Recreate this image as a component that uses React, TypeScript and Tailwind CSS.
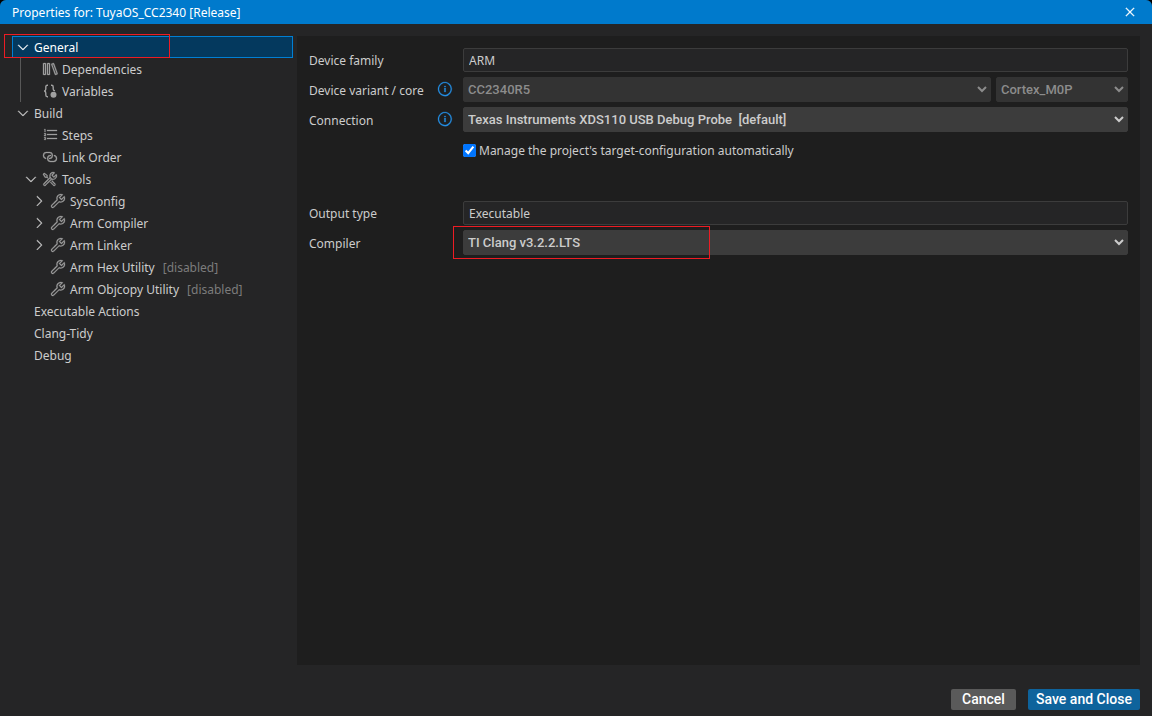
import { useState } from 'react';
import type { ComponentType, ReactNode } from 'react';
import {
  VscChevronDown,
  VscChevronRight,
  VscClose,
  VscInfo,
  VscLibrary,
  VscLink,
  VscListOrdered,
  VscSymbolProperty,
  VscTools,
} from 'react-icons/vsc';

interface IconProps {
  className?: string;
}

// braces with a filled dot at the lower right
function VariablesIcon({ className }: IconProps) {
  return (
    <svg viewBox="0 0 16 16" className={className} fill="none" stroke="currentColor">
      <g strokeWidth="1.4">
        <path d="M6 2.3H5.4C4.3 2.3 3.8 2.9 3.8 4v2c0 1.1-.5 1.8-1.6 2 1.1.2 1.6.9 1.6 2v2c0 1.1.5 1.7 1.6 1.7H6" />
        <path d="M9 2.3h.6c1.1 0 1.6.6 1.6 1.7v2c0 1 .6 1.7 1.8 1.9" />
      </g>
      <circle cx="11.5" cy="11.8" r="3" fill="currentColor" stroke="none" />
    </svg>
  );
}

interface TreeNode {
  label: string;
  icon?: ComponentType<IconProps>;
  disabled?: boolean;
  collapsed?: boolean;
  children?: TreeNode[];
}

const tree: TreeNode[] = [
  {
    label: 'General',
    children: [
      { label: 'Dependencies', icon: VscLibrary },
      { label: 'Variables', icon: VariablesIcon },
    ],
  },
  {
    label: 'Build',
    children: [
      { label: 'Steps', icon: VscListOrdered },
      { label: 'Link Order', icon: VscLink },
      {
        label: 'Tools',
        icon: VscTools,
        children: [
          { label: 'SysConfig', icon: VscSymbolProperty, collapsed: true },
          { label: 'Arm Compiler', icon: VscSymbolProperty, collapsed: true },
          { label: 'Arm Linker', icon: VscSymbolProperty, collapsed: true },
          { label: 'Arm Hex Utility', icon: VscSymbolProperty, disabled: true },
          { label: 'Arm Objcopy Utility', icon: VscSymbolProperty, disabled: true },
        ],
      },
    ],
  },
  { label: 'Executable Actions' },
  { label: 'Clang-Tidy' },
  { label: 'Debug' },
];

const indents = ['pl-[2px]', 'pl-[10px]', 'pl-[18px]'];

interface TreeItemProps {
  node: TreeNode;
  depth: number;
  selected: string;
  onSelect: (label: string) => void;
}

function TreeItem({ node, depth, selected, onSelect }: TreeItemProps) {
  const Icon = node.icon;
  const isSelected = node.label === selected;

  return (
    <li className="relative">
      <button
        type="button"
        onClick={() => onSelect(node.label)}
        className={`flex h-[22px] w-full items-center border text-left whitespace-pre ${indents[depth]} ${
          isSelected ? 'border-[#007fd4] bg-[#04395e] text-white' : 'border-transparent'
        }`}
      >
        <span className="mr-[3px] w-4 shrink-0">
          {node.children && <VscChevronDown className="size-4 stroke-[0.3]" />}
          {node.collapsed && <VscChevronRight className="size-4 stroke-[0.3]" />}
        </span>
        {Icon && <Icon className="mr-1 size-4 shrink-0 stroke-[0.3] text-[#a0a0a0]" />}
        {node.label}
        {node.disabled && <span className="ml-2 text-[#7c7c7c]">[disabled]</span>}
      </button>
      {isSelected && (
        <span className="pointer-events-none absolute -top-0.5 -left-2 z-10 h-6 w-[166px] border border-[#ed1c24]" />
      )}
      {node.children && (
        <ul className="relative">
          {isSelected && <span className="absolute inset-y-0 left-2 w-px bg-[#585858]" />}
          {node.children.map((child) => (
            <TreeItem key={child.label} node={child} depth={depth + 1} selected={selected} onSelect={onSelect} />
          ))}
        </ul>
      )}
    </li>
  );
}

interface FieldProps {
  id: string;
  label: string;
  info?: boolean;
  children: ReactNode;
}

function Field({ id, label, info, children }: FieldProps) {
  return (
    <div className="flex h-[30px] items-center">
      <label htmlFor={id} className="w-32 shrink-0 whitespace-nowrap">
        {label}
      </label>
      <span className="w-[26px] shrink-0 pb-0.5">
        {info && <VscInfo className="size-4 stroke-[0.3] text-[#2490e6]" />}
      </span>
      <div className="flex min-w-0 flex-1 gap-[5px]">{children}</div>
    </div>
  );
}

const inputClass = 'h-6 w-full rounded-xs border border-[#3c3c3c] bg-[#252526] px-[5px] outline-none';
const selectClass =
  "mb-px h-[25px] min-w-0 rounded-xs border border-[#3c3c3c] bg-[#3c3c3c] font-[Roboto,sans-serif] text-[13px] font-medium outline-none disabled:border-[#333333] disabled:bg-[#333333] disabled:text-[#8c8c8c] disabled:opacity-100";
const buttonClass = 'h-[21px] rounded-xs font-[Roboto,sans-serif] text-[14px] font-medium text-white';

export default function App() {
  const [selected, setSelected] = useState('General');
  const [managed, setManaged] = useState(true);

  return (
    <div className="min-h-screen bg-black">
      <div className="flex min-h-screen flex-col overflow-hidden rounded-t-md bg-[#252526] font-['Noto_Sans','Open_Sans',sans-serif] text-[12px] leading-[19px] text-[#cccccc]">
        <header className="flex h-6 items-center justify-between bg-[#007acc] px-3 text-white">
          <h1>Properties for: TuyaOS_CC2340 [Release]</h1>
          <button type="button" aria-label="Close" className="mr-[2px]">
            <VscClose className="size-4 stroke-[0.3]" />
          </button>
        </header>

        <div className="flex flex-1 gap-1 px-3 pt-3">
          <nav className="w-[281px] shrink-0">
            <ul>
              {tree.map((node) => (
                <TreeItem key={node.label} node={node} depth={0} selected={selected} onSelect={setSelected} />
              ))}
            </ul>
          </nav>

          <main className="flex-1 bg-[#1e1e1e] px-3 pt-[9px]">
            <Field id="family" label="Device family">
              <input id="family" readOnly value="ARM" className={inputClass} />
            </Field>
            <Field id="variant" label="Device variant / core" info>
              <select id="variant" disabled className={`${selectClass} flex-1`}>
                <option>CC2340R5</option>
              </select>
              <select aria-label="Core" disabled className={`${selectClass} w-[132px]`}>
                <option>Cortex_M0P</option>
              </select>
            </Field>
            <Field id="connection" label="Connection" info>
              <select id="connection" className={`${selectClass} w-full`}>
                <option>Texas Instruments XDS110 USB Debug Probe&nbsp; [default]</option>
              </select>
            </Field>
            <div className="mb-[33px] ml-[154px] flex h-[30px] items-center gap-[3px]">
              <input
                id="managed"
                type="checkbox"
                checked={managed}
                onChange={(e) => setManaged(e.target.checked)}
                className="size-[13px]"
              />
              <label htmlFor="managed">Manage the project's target-configuration automatically</label>
            </div>
            <Field id="output" label="Output type">
              <input id="output" readOnly value="Executable" className={inputClass} />
            </Field>
            <Field id="compiler" label="Compiler">
              <div className="relative w-full">
                <select id="compiler" className={`${selectClass} block w-full`}>
                  <option>TI Clang v3.2.2.LTS</option>
                </select>
                <span className="pointer-events-none absolute -top-1 -left-2.5 z-10 h-[33px] w-[257px] border border-[#ed1c24]" />
              </div>
            </Field>
          </main>
        </div>

        <footer className="flex justify-end gap-3 px-3 pt-6 pb-1.5">
          <button type="button" className={`${buttonClass} w-[65px] bg-[#5a5a5a]`}>
            Cancel
          </button>
          <button type="button" className={`${buttonClass} w-28 bg-[#0e639c]`}>
            Save and Close
          </button>
        </footer>
      </div>
    </div>
  );
}
